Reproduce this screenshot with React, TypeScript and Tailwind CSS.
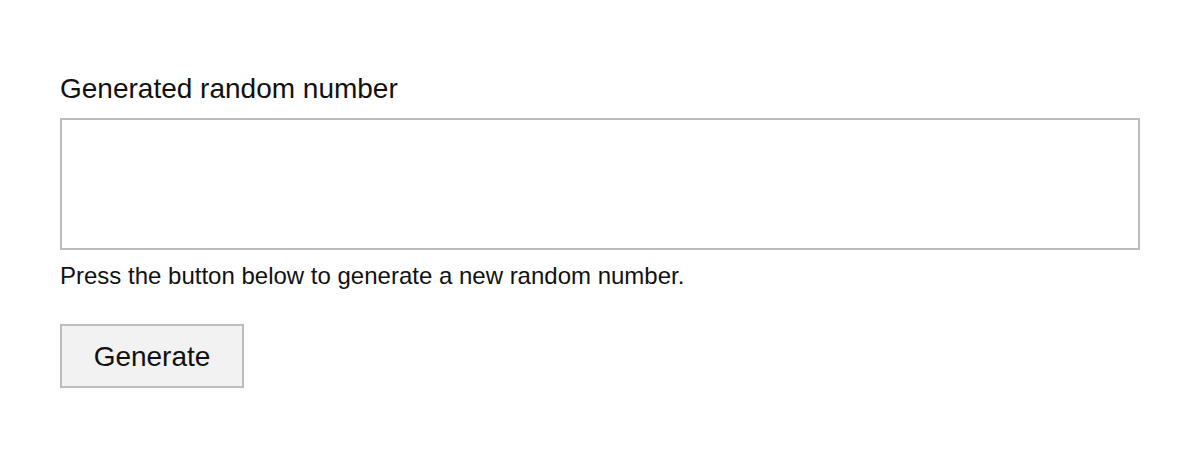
export default function App() {
  return (
    <div className="min-h-screen bg-white px-[60px] pt-[73px] font-['Liberation_Sans',Arial,sans-serif] text-[#111]">
      <label className="block text-[28px] leading-[32px]">Generated random number</label>
      <div className="mt-[13px] h-[132px] w-full border-2 border-[#bcbcbc] bg-white" />
      <p className="mt-[12px] text-[24px] leading-[28px]">
        Press the button below to generate a new random number.
      </p>
      <button
        type="button"
        className="mt-[34px] h-[64px] w-[184px] border-2 border-[#bcbcbc] bg-[#f2f2f2] pt-[2px] text-[28px]"
      >
        Generate
      </button>
    </div>
  );
}
